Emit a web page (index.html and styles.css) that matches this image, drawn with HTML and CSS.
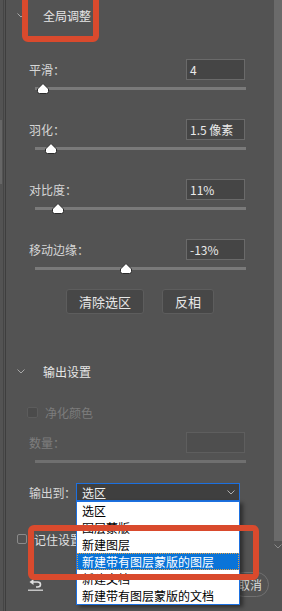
FILE: index.html
```html
<!DOCTYPE html>
<html lang="zh-CN">
<head>
    <meta charset="UTF-8">
    <title>选择并遮住</title>
    <link rel="stylesheet" href="styles.css">
</head>
<body>
    <div class="panel">
        <div class="edge"><div class="edge-thumb"></div></div>

        <div class="main">
            <!-- 全局调整 -->
            <div class="section-head">
                <svg class="chevron" width="8" height="5" viewBox="0 0 8 5"><polyline points="0.5,0.5 4,4 7.5,0.5" fill="none" stroke="#a8a8a8" stroke-width="1"/></svg>
                <span>全局调整</span>
            </div>

            <div class="fields">
                <div class="field">
                    <div class="field-top"><span class="label">平滑：</span><div class="num">4</div></div>
                    <div class="slider"><div class="track"></div>
                        <svg class="thumb" style="left: 3.8%" width="12" height="11" viewBox="0 0 12 11"><path d="M6 0.5 L11.5 6 V8.5 Q11.5 10.5 9.5 10.5 H2.5 Q0.5 10.5 0.5 8.5 V6 Z" fill="#fff" stroke="#2a2a2a"/></svg>
                    </div>
                </div>
                <div class="field">
                    <div class="field-top"><span class="label">羽化：</span><div class="num">1.5 像素</div></div>
                    <div class="slider"><div class="track"></div>
                        <svg class="thumb" style="left: 7.6%" width="12" height="11" viewBox="0 0 12 11"><path d="M6 0.5 L11.5 6 V8.5 Q11.5 10.5 9.5 10.5 H2.5 Q0.5 10.5 0.5 8.5 V6 Z" fill="#fff" stroke="#2a2a2a"/></svg>
                    </div>
                </div>
                <div class="field">
                    <div class="field-top"><span class="label">对比度：</span><div class="num">11%</div></div>
                    <div class="slider"><div class="track"></div>
                        <svg class="thumb" style="left: 10.9%" width="12" height="11" viewBox="0 0 12 11"><path d="M6 0.5 L11.5 6 V8.5 Q11.5 10.5 9.5 10.5 H2.5 Q0.5 10.5 0.5 8.5 V6 Z" fill="#fff" stroke="#2a2a2a"/></svg>
                    </div>
                </div>
                <div class="field">
                    <div class="field-top"><span class="label">移动边缘：</span><div class="num">-13%</div></div>
                    <div class="slider"><div class="track"></div>
                        <svg class="thumb" style="left: 43.1%" width="12" height="11" viewBox="0 0 12 11"><path d="M6 0.5 L11.5 6 V8.5 Q11.5 10.5 9.5 10.5 H2.5 Q0.5 10.5 0.5 8.5 V6 Z" fill="#fff" stroke="#2a2a2a"/></svg>
                    </div>
                </div>
            </div>

            <div class="buttons">
                <button class="btn">清除选区</button>
                <button class="btn">反相</button>
            </div>

            <!-- 输出设置 -->
            <div class="section-head output-head">
                <svg class="chevron" width="8" height="5" viewBox="0 0 8 5"><polyline points="0.5,0.5 4,4 7.5,0.5" fill="none" stroke="#a8a8a8" stroke-width="1"/></svg>
                <span>输出设置</span>
            </div>

            <div class="check-row decontam disabled">
                <span class="box"></span><span>净化颜色</span>
            </div>

            <div class="field amount disabled">
                <div class="field-top"><span class="label">数量：</span><div class="num"></div></div>
                <div class="slider"><div class="track"></div></div>
            </div>

            <div class="select-row">
                <span class="label">输出到：</span>
                <div class="select">
                    <span>选区</span>
                    <svg width="8" height="5" viewBox="0 0 8 5"><polyline points="0.5,0.5 4,4 7.5,0.5" fill="none" stroke="#b0b0b0" stroke-width="1"/></svg>
                    <ul class="options">
                        <li>选区</li>
                        <li>图层蒙版</li>
                        <li>新建图层</li>
                        <li class="selected">新建带有图层蒙版的图层</li>
                        <li>新建文档</li>
                        <li>新建带有图层蒙版的文档</li>
                    </ul>
                </div>
            </div>

            <div class="check-row remember">
                <span class="box"></span><span>记住设置</span>
            </div>

            <div class="footer">
                <svg class="reset" width="17" height="12" viewBox="0 0 17 12"><path d="M6 3 H10.5 Q13.5 3 13.5 5.5 Q13.5 8 10.5 8 H9" fill="none" stroke="#e0e0e0" stroke-width="1.6"/><path d="M2.5 3 L6.5 0 V6 Z" fill="#e0e0e0"/><line x1="1" y1="11.2" x2="16" y2="11.2" stroke="#e0e0e0" stroke-width="1.2"/></svg>
                <button class="pill">取消</button>
            </div>
        </div>

        <div class="scrollbar">
            <div class="scroll-thumb"></div>
            <svg class="scroll-arrow" width="8" height="5" viewBox="0 0 8 5"><polyline points="0.5,0.5 4,4 7.5,0.5" fill="none" stroke="#8a8a8a" stroke-width="1"/></svg>
        </div>
    </div>

    <!-- annotation frames -->
    <div class="mark mark-top"></div>
    <div class="mark mark-bottom"></div>
</body>
</html>
```

FILE: styles.css
```css
* {
    margin: 0;
    padding: 0;
    box-sizing: border-box;
}

body {
    width: 282px;
    height: 611px;
    overflow: hidden;
    background: #535353;
    font-family: "Noto Sans CJK SC", "Noto Sans", sans-serif;
    font-size: 12px;
    color: #d8d8d8;
    position: relative;
}

.panel {
    display: flex;
    height: 611px;
}

.edge {
    width: 6px;
    border-right: 1px solid #3e3e3e;
    position: relative;
}

.edge::before {
    content: "";
    position: absolute;
    left: 3px;
    top: 0;
    bottom: 0;
    width: 1px;
    background: #454545;
}

.edge-thumb {
    width: 2px;
    height: 64px;
    margin-top: 120px;
    background: #666;
}

.main {
    flex: 1;
    display: flex;
    flex-direction: column;
}

.section-head {
    height: 30px;
    display: flex;
    align-items: center;
    padding-left: 11px;
    gap: 18px;
    color: #e6e6e6;
    font-size: 12px;
}

.chevron {
    flex: none;
}

.fields {
    padding-top: 29px;
    display: flex;
    flex-direction: column;
    gap: 24px;
}

.field {
    padding: 0 29px 0 23px;
}

.field-top {
    height: 21px;
    display: flex;
    align-items: center;
    justify-content: space-between;
}

.label {
    color: #d6d6d6;
    white-space: nowrap;
}

.num {
    width: 59px;
    height: 21px;
    background: #454545;
    border: 1px solid #6a6a6a;
    color: #eaeaea;
    padding-left: 3px;
    line-height: 19px;
    font-size: 12px;
}

.slider {
    position: relative;
    height: 14px;
    margin: 1px -1px 0 6px;
    display: flex;
    align-items: center;
}

.track {
    width: 100%;
    height: 3px;
    background: #7a7a7a;
}

.thumb {
    position: absolute;
    top: 2px;
    margin-left: -6px;
}

.buttons {
    margin-top: 14px;
    display: flex;
    justify-content: center;
    gap: 18px;
}

.btn {
    height: 25px;
    padding: 0 12px;
    background: #474747;
    border: 1px solid #5d5d5d;
    border-radius: 3px;
    color: #e8e8e8;
    font-family: inherit;
    font-size: 13px;
}

.output-head {
    margin-top: 42px;
}

.check-row {
    height: 16px;
    display: flex;
    align-items: center;
}

.box {
    width: 11px;
    height: 11px;
    border-radius: 2px;
}

.decontam {
    margin-top: 18px;
    padding-left: 21px;
    gap: 7px;
    color: #7c7c7c;
}

.decontam .box {
    background: #4b4b4b;
    border: 1px solid #5c5c5c;
}

.amount {
    margin-top: 12px;
}

.amount .label {
    color: #7e7e7e;
}

.amount .num {
    background: #4e4e4e;
    border-color: #5e5e5e;
}

.amount .track {
    background: #6f6f6f;
}

.select-row {
    margin-top: 15px;
    padding-left: 23px;
    display: flex;
    align-items: center;
}

.select-row .label {
    flex: none;
    width: 47px;
    letter-spacing: -0.3px;
}

.select {
    position: relative;
    flex: none;
    width: 164px;
    height: 18px;
    background: #3f3f3f;
    border: 1px solid #1c70e0;
    display: flex;
    align-items: center;
    justify-content: space-between;
    padding: 0 4px 0 5px;
    color: #f0f0f0;
}

.options {
    position: absolute;
    left: -1px;
    top: 17px;
    width: 164px;
    list-style: none;
    background: #fff;
    border: 1px solid #1c70e0;
    box-shadow: 3px 2px 4px rgba(0, 0, 0, 0.45);
    z-index: 2;
}

.options li {
    height: 17px;
    line-height: 17px;
    padding-left: 5px;
    color: #000;
    white-space: nowrap;
}

.options li.selected {
    background: #0a74d8;
    color: #fff;
    outline: 1px dotted #e8a040;
    outline-offset: -1px;
}

.remember {
    margin-top: 30px;
    padding-left: 11px;
    gap: 7px;
    color: #e2e2e2;
}

.remember .box {
    width: 10px;
    height: 10px;
    border: 1px solid #8a8a8a;
}

.footer {
    margin-top: 25px;
    height: 25px;
    display: flex;
    align-items: center;
    justify-content: space-between;
    padding: 0 5px 0 21px;
}

.pill {
    height: 25px;
    padding: 0 6px;
    background: none;
    border: 1px solid #707070;
    border-radius: 13px;
    color: #dcdcdc;
    font-family: inherit;
    font-size: 12px;
}

.scrollbar {
    width: 8px;
    display: flex;
    flex-direction: column;
    align-items: center;
}

.scroll-thumb {
    width: 8px;
    height: 541px;
    background: #6a6a6a;
}

.scroll-arrow {
    margin-top: 3px;
}

.mark {
    position: absolute;
    border: 6px solid #d94a2d;
    border-radius: 6px;
    z-index: 5;
}

.mark-top {
    left: 22px;
    top: -8px;
    width: 77px;
    height: 50px;
}

.mark-bottom {
    left: 28px;
    top: 525px;
    width: 231px;
    height: 55px;
}
```
